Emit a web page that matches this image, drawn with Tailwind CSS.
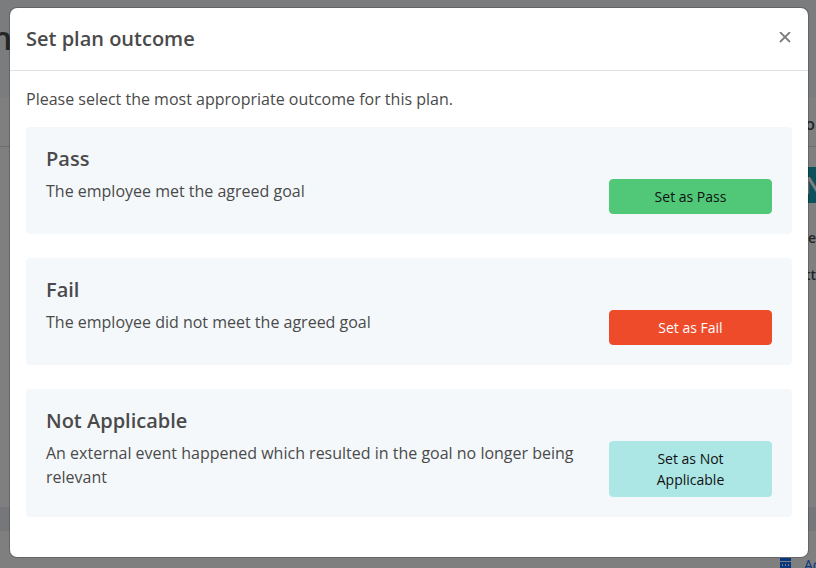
<!DOCTYPE html>
<html lang="en">

<head>
    <meta charset="UTF-8">
    <meta name="viewport" content="width=device-width, initial-scale=1.0">
    <title>Set plan outcome</title>
    <script src="https://cdn.jsdelivr.net/npm/@tailwindcss/browser@4"></script>
</head>

<body class="relative h-screen overflow-hidden bg-white font-['Open_Sans','Noto_Sans',sans-serif] text-base text-[#4a4a4a]">
    <!-- page behind the modal -->
    <div class="h-full overflow-hidden" aria-hidden="true">
        <div class="flex h-[97px] items-start bg-[#f6f8fb] pt-3.5">
            <div class="flex w-[12px] justify-end text-[32px] leading-[48px] font-semibold">n</div>
        </div>
        <div class="flex h-[50px] items-center justify-end border-b border-[#dcdcdc] pt-1 pr-[1px] text-base font-semibold">o</div>
        <div class="flex h-[360px] flex-col items-end pt-5 text-sm font-semibold">
            <div class="flex h-9 w-3 items-center bg-[#17a2b8] text-2xl text-white">N</div>
            <div class="pt-6 leading-[21px]">ne</div>
            <div class="pt-4 leading-[21px]">tt</div>
        </div>
        <div class="h-6 bg-[#eceef5]"></div>
        <div class="flex justify-end gap-3 pt-[22px] text-sm leading-[24px] text-[#0d6eff]">
            <svg class="mt-[5px] h-4 w-3" viewBox="0 0 12 16" fill="currentColor">
                <path d="M0 0h11v3H0zM0 4h11v12H0z" />
                <path fill="#fff" d="M2 6h1v2H2zM5 6h1v2H5zM8 6h1v2H8zM2 10h1v2H2zM5 10h1v2H5zM8 10h1v2H8z" />
            </svg>
            <div class="w-3">Ac</div>
        </div>
    </div>

    <div class="absolute inset-0 bg-black/50 pt-[7px] pr-[7px] pl-[9px]">
        <div role="dialog" aria-modal="true" aria-labelledby="title"
            class="rounded-[8px] border border-black/20 bg-white bg-clip-padding">
            <div class="flex items-start justify-between border-b border-[#dee2e6] p-4">
                <h5 id="title" class="text-xl leading-[30px] font-semibold">Set plan outcome</h5>
                <button type="button" aria-label="Close" class="p-px pt-2 text-[#7f7f7f]">
                    <svg class="h-3 w-3" viewBox="0 0 12 12" fill="none" stroke="currentColor" stroke-width="1.8">
                        <path d="M1 0l10 10M11 0L1 10" />
                    </svg>
                </button>
            </div>
            <div class="p-4">
                <p class="mb-4 leading-6">Please select the most appropriate outcome for this plan.</p>

                <div class="mb-6 rounded bg-[#f4f8fb] p-5">
                    <h5 class="mb-2 text-xl leading-6 font-semibold">Pass</h5>
                    <div class="flex items-start justify-between gap-7">
                        <p class="leading-6">The employee met the agreed goal</p>
                        <button type="button"
                            class="w-[163px] shrink-0 rounded border border-[#50c878] bg-[#50c878] px-8 py-1.5 text-sm leading-[21px] text-[#111]">Set as Pass</button>
                    </div>
                </div>

                <div class="mb-6 rounded bg-[#f4f8fb] p-5">
                    <h5 class="mb-2 text-xl leading-6 font-semibold">Fail</h5>
                    <div class="flex items-start justify-between gap-7">
                        <p class="leading-6">The employee did not meet the agreed goal</p>
                        <button type="button"
                            class="w-[163px] shrink-0 rounded border border-[#ee4b2b] bg-[#ee4b2b] px-8 py-1.5 text-sm leading-[21px] text-white">Set as Fail</button>
                    </div>
                </div>

                <div class="mb-6 rounded bg-[#f4f8fb] p-5">
                    <h5 class="mb-2 text-xl leading-6 font-semibold">Not Applicable</h5>
                    <div class="flex items-start justify-between gap-7">
                        <p class="leading-6">An external event happened which resulted in the goal no longer being relevant</p>
                        <button type="button"
                            class="w-[163px] shrink-0 rounded border border-[#ace7e6] bg-[#ace7e6] px-8 py-1.5 text-sm leading-[21px] text-[#111]">Set as Not Applicable</button>
                    </div>
                </div>
            </div>
        </div>
    </div>
</body>

</html>
